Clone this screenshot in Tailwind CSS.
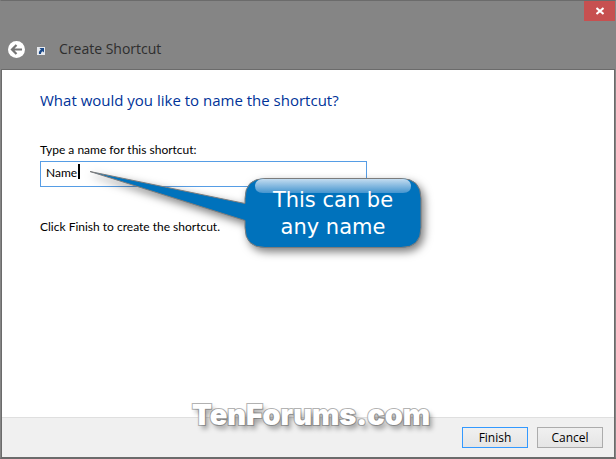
<!DOCTYPE html>
<html lang="en">
<head>
  <meta charset="UTF-8" />
  <meta name="viewport" content="width=device-width, initial-scale=1.0"/>
  <title>Create Shortcut</title>
  <script src="https://cdn.jsdelivr.net/npm/@tailwindcss/browser@4"></script>
</head>
<body class="bg-[#858585] font-['Open_Sans',sans-serif] text-black">

  <div class="min-h-screen flex flex-col border border-b-2 border-[#6b6b6b] border-x-[#858585]">

    <!-- title bar -->
    <header class="flex flex-col h-17">
      <button aria-label="Close" class="self-end w-[31px] h-5 shrink-0 flex items-center justify-center bg-[#c75050]">
        <svg width="8" height="8" viewBox="0 0 8 8" stroke="#fff" stroke-width="2"><path d="M0.5 1L7.5 7M7.5 1L0.5 7"/></svg>
      </button>
      <div class="flex items-center pl-[7px] pt-[18px]">
        <button aria-label="Back" class="w-[17px] h-[17px]">
          <svg width="17" height="17" viewBox="0 0 17 17">
            <circle cx="8.5" cy="8.5" r="8.5" fill="#fff"/>
            <path d="M14 8.500H4.500M8.500 4L4 8.500L8.500 13" fill="none" stroke="#757575" stroke-width="2.200"/>
          </svg>
        </button>
        <svg class="ml-3 mt-1" width="8" height="8" viewBox="0 0 8 8">
          <path d="M0 0h8v8H0z" fill="#e6e9ee"/>
          <path d="M2.500 1H7v4.500L5.700 4.300C4.300 5 4 6 4 7H2C1.500 5.300 2.300 3.800 3.900 2.600z" fill="#1b4a8a"/>
        </svg>
        <h1 class="ml-3.5 text-sm leading-5 text-[#2e2e2e]">Create Shortcut</h1>
      </div>
    </header>

    <!-- wizard page -->
    <div class="grow flex flex-col border border-b-0 border-[#6b6b6b] bg-white">
      <main class="relative grow px-[38px] pt-[18px]">
        <h2 class="text-[15px] leading-6 text-[#003399]">What would you like to name the shortcut?</h2>
        <label for="name" class="block mt-[30px] font-['Lato',sans-serif] text-xs leading-4">Type a name for this shortcut:</label>
        <div class="relative mt-[3px] w-[327px]">
          <input id="name" type="text" value="Name" class="block w-full h-[26px] border border-[#569de5] px-[5px] pb-1 font-['Lato',sans-serif] text-xs outline-none"/>
          <span class="absolute left-[38px] top-[3px] w-0.5 h-[15px] bg-black"></span>
        </div>
        <p class="mt-8 font-['Lato',sans-serif] text-xs leading-4">Click Finish to create the shortcut.</p>

        <!-- callout pointing at the name box -->
        <div class="absolute left-[87px] top-[100px] w-[334px] h-[80px]">
          <svg class="overflow-visible drop-shadow-[3px_4px_4px_rgba(0,0,0,0.5)]" width="334" height="80" viewBox="0 0 334 80">
            <defs>
              <linearGradient id="gloss" x1="0" y1="0" x2="0" y2="1">
                <stop offset="0" stop-color="#c3dcf0"/>
                <stop offset="1" stop-color="#4595cf"/>
              </linearGradient>
            </defs>
            <path d="M1 1.500L156 33.500V28.500Q156 8.500 176 8.500H312Q332 8.500 332 28.500V57.500Q332 77.500 312 77.500H176Q156 77.500 156 57.500V50.500Z" fill="#0072bc" stroke="#7c7c7c"/>
            <path d="M174 9H314C320 9 322 13 322 16Q322 23 314 23H174Q166 23 166 16C166 13 168 9 174 9Z" fill="url(#gloss)"/>
          </svg>
          <p class="absolute left-[156px] top-[17px] w-[176px] text-center text-[21px] leading-[27px] font-['DejaVu_Sans',sans-serif] text-white">This can be<br>any name</p>
        </div>
      </main>

      <footer class="relative flex justify-end gap-[9px] h-10 pt-[9px] pr-[11px] border-t border-[#dfdfdf] bg-[#f0f0f0]">
        <button class="w-[66px] h-[21px] border border-[#3399ff] bg-linear-to-b from-[#f0f0f0] to-[#e5e5e5] text-xs">Finish</button>
        <button class="w-[66px] h-[21px] border border-[#acacac] bg-linear-to-b from-[#f0f0f0] to-[#e5e5e5] text-xs">Cancel</button>
        <!-- watermark -->
        <span class="absolute left-[190px] -top-[21px] font-['Inter',sans-serif] font-black text-[29px] leading-9 text-white [-webkit-text-stroke:2px_#b4b4b4] [paint-order:stroke_fill] [text-shadow:3px_4px_5px_rgba(0,0,0,0.35)]">TenForums.com</span>
      </footer>
    </div>
  </div>

</body>
</html>
